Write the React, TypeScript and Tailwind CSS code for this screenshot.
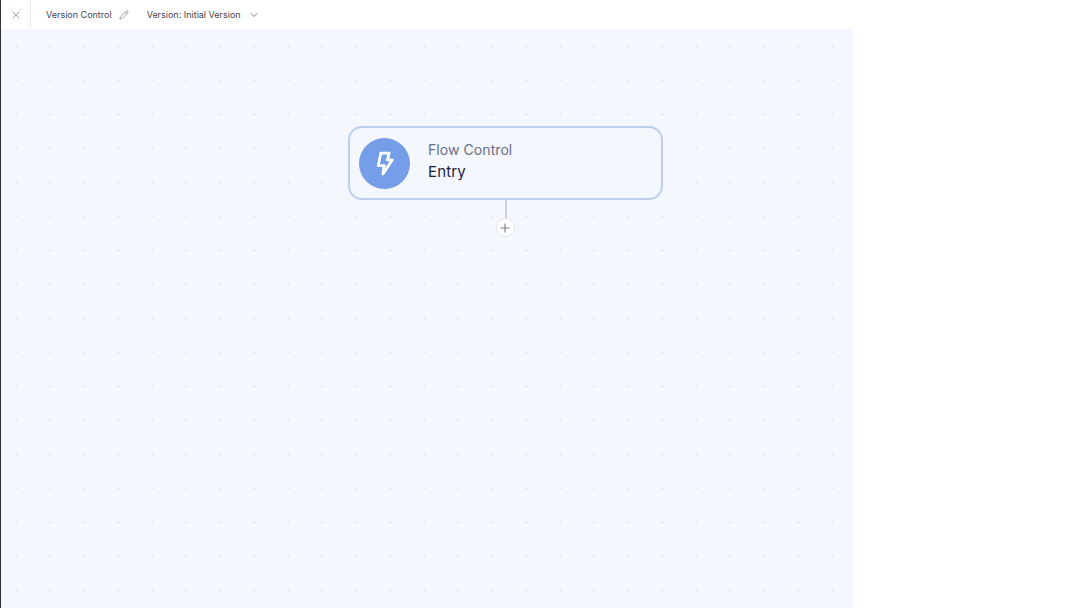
import React from 'react';
import { ChevronDown, Pencil, Plus, X } from 'lucide-react';

// Hollow lightning bolt from the entry node
const BoltIcon = () => (
  <svg viewBox="0 0 17 24" className="h-[25px] w-[18px]" fill="none" stroke="white" strokeWidth={2.7} strokeLinejoin="round">
    <path d="M4.5 2H12.5L10.8 8.5H15.5L6.5 22L7.8 14H2Z" />
  </svg>
);

export default function App() {
  return (
    <div className="flex h-[608px] w-[1080px] overflow-hidden bg-white font-['Inter',sans-serif]">
      {/* Dark sliver of the page behind the drawer */}
      <div className="w-px shrink-0 bg-[#2d3138]" />

      <div className="flex w-[853px] shrink-0 flex-col">
        {/* Header */}
        <div className="flex h-[29px] shrink-0 items-center bg-white">
          <button className="flex h-full w-[30px] items-center justify-center border-r border-[#e8eaee] text-[#a3a7b2]">
            <X className="h-[12px] w-[12px]" strokeWidth={2} />
          </button>
          <span className="ml-[15px] text-[9px] text-[#3f4450]">Version Control</span>
          <Pencil className="ml-[7px] h-[10px] w-[10px] text-[#6b7280]" strokeWidth={1.5} />
          <span className="ml-[18px] text-[9px] text-[#3f4450]">Version: Initial Version</span>
          <ChevronDown className="ml-[7px] h-[12px] w-[12px] text-[#6b7280]" strokeWidth={1.8} />
        </div>

        {/* Canvas */}
        <div className="relative flex-1 bg-[#f4f7fe] bg-[radial-gradient(circle,#dfe3ea_1px,transparent_1.2px)] bg-[size:34px_34px] bg-[position:-1.5px_0.5px]">
          <div className="absolute left-[347px] top-[97px] flex flex-col items-center">
            <div className="flex h-[74px] w-[315px] items-center rounded-[14px] border-2 border-[#bfd0ef] bg-[#f4f7fe] pl-[9px]">
              <div className="flex h-[51px] w-[51px] shrink-0 items-center justify-center rounded-full bg-[#769de8]">
                <BoltIcon />
              </div>
              <div className="-mt-[5px] ml-[18px] flex flex-col">
                <span className="text-[14px] leading-[22px] tracking-[0.005em] text-[#6b7084]">Flow Control</span>
                <span className="text-[15px] leading-[22px] tracking-[0.01em] text-[#1a1f3d]">Entry</span>
              </div>
            </div>
            <div className="h-[19px] w-[2px] bg-[#cdd1da]" />
            <button className="-mt-px -ml-px flex h-[19px] w-[19px] items-center justify-center rounded-full border border-[#e2e5ea] bg-white text-[#7a7f8c]">
              <Plus className="h-[14px] w-[14px]" strokeWidth={2} />
            </button>
          </div>
        </div>
      </div>
    </div>
  );
}
